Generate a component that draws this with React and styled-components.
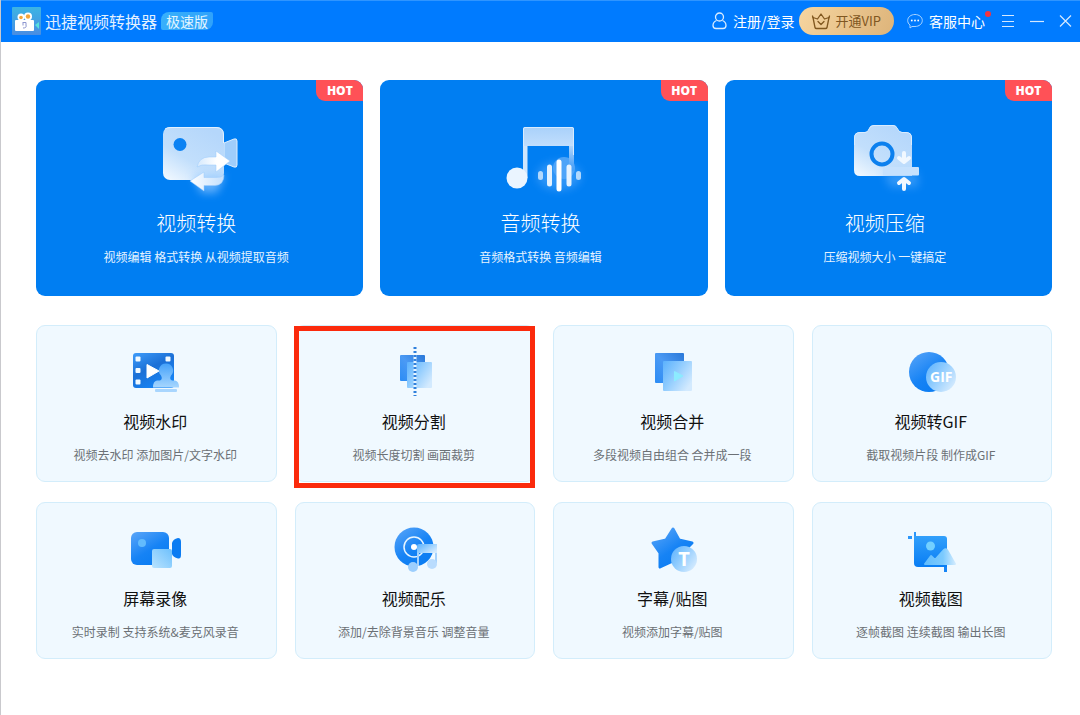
import React from "react";
import styled, { createGlobalStyle } from "styled-components";

const GlobalStyle = createGlobalStyle`
  body {
    margin: 0;
    background: #fff;
    font-family: "Noto Sans CJK SC", "Noto Sans", sans-serif;
  }

  button {
    font: inherit;
    color: inherit;
    border: 0;
    padding: 0;
    background: none;
    cursor: pointer;
  }

  svg {
    display: block;
    flex-shrink: 0;
  }
`;

const Window = styled.div`
  min-height: 100vh;
  box-sizing: border-box;
  border-left: 1px solid #c9c9cd;
`;

const TitleBar = styled.header`
  display: flex;
  align-items: center;
  justify-content: space-between;
  height: 42px;
  box-sizing: border-box;
  padding: 0 7px 1px 11px;
  background: #007bff;
  border-top: 1px solid #2f95ff;
  color: #fff;
`;

const Brand = styled.div`
  display: flex;
  align-items: center;
  gap: 4px;
`;

const BrandName = styled.h1`
  margin: 0;
  font-size: 16px;
  font-weight: 400;
  line-height: 24px;
  color: #e3f1ff;
`;

const Edition = styled.span`
  padding: 0 5px;
  border-radius: 8px 2px 8px 2px;
  background: linear-gradient(100deg, #38b0fb, #2fa2fb);
  color: #e3f6ff;
  font-size: 14px;
  line-height: 18px;
`;

const Toolbar = styled.div`
  display: flex;
  align-items: center;
`;

const ToolButton = styled.button`
  position: relative;
  display: flex;
  align-items: center;
  gap: 6px;
  font-size: 14px;
  line-height: 20px;
`;

const VipButton = styled(ToolButton)`
  gap: 4px;
  height: 28px;
  margin: 0 13px 0 5px;
  padding: 0 13px 0 12px;
  border-radius: 14px;
  background: linear-gradient(115deg, #f6d5a0, #ddb47a);
  color: #7f5722;
  font-size: 13px;
`;

const Dot = styled.span`
  position: absolute;
  top: 0;
  right: -6px;
  width: 6px;
  height: 6px;
  border-radius: 50%;
  background: #f5333f;
`;

const WindowControls = styled.div`
  display: flex;
  align-items: center;
  gap: 15px;
  margin-left: 16px;
`;

const Content = styled.main`
  padding: 38px 28px 24px 35px;
`;

const HeroGrid = styled.div`
  display: grid;
  grid-template-columns: repeat(3, 1fr);
  gap: 17px;
  margin-bottom: 29px;
`;

const HeroCard = styled.button`
  position: relative;
  display: flex;
  flex-direction: column;
  align-items: center;
  padding: 35px 7px 30px 0;
  border-radius: 9px;
  background: #007ef2;
  color: #fff;
`;

const HeroTitle = styled.span`
  margin-top: 14px;
  font-size: 20px;
  font-weight: 300;
  line-height: 28px;
`;

const HeroText = styled.span`
  margin-top: 11px;
  font-size: 12px;
  line-height: 18px;
  color: #e6f3ff;
`;

const HotTag = styled.span`
  position: absolute;
  top: 0;
  right: 0;
  width: 47px;
  border-radius: 0 9px 0 9px;
  background: #ff5157;
  font-family: "Open Sans", sans-serif;
  font-size: 12px;
  font-weight: 800;
  line-height: 21px;
  text-align: center;
`;

const ToolGrid = styled.div`
  display: grid;
  grid-template-columns: repeat(4, 1fr);
  gap: 20px 18px;
`;

const ToolCard = styled.button`
  position: relative;
  display: flex;
  flex-direction: column;
  align-items: center;
  padding: 19px 2px 17px 0;
  border: 1px solid #d3edfb;
  border-radius: 9px;
  background: #f0f9ff;

  ${(props) =>
    props.$marked &&
    `
    &::after {
      content: "";
      position: absolute;
      inset: 0 -1px -7px -2px;
      border: 5px solid #fb2a0c;
      background: transparent;
    }
  `}
`;

const ToolTitle = styled.span`
  margin-top: 12px;
  font-size: 16px;
  line-height: 24px;
  color: #111;
`;

const ToolText = styled.span`
  margin-top: 13px;
  font-size: 12px;
  line-height: 18px;
  color: #6b7075;
`;

const HeroIcon = ({ children }) => (
  <svg width="90" height="80" viewBox="0 0 90 80" overflow="visible" aria-hidden="true">
    {children}
  </svg>
);

const ToolIcon = ({ children }) => (
  <svg width="60" height="52" viewBox="0 0 60 52" aria-hidden="true">
    {children}
  </svg>
);

// gradients and the glow used by all the card icons
const IconDefsSvg = styled.svg`
  position: absolute;
`;

const IconDefs = () => (
  <IconDefsSvg width="0" height="0" aria-hidden="true">
    <defs>
      <linearGradient id="frost" x1="0" y1="1" x2="0.7" y2="0">
        <stop offset="0" stopColor="#f4faff" />
        <stop offset="0.45" stopColor="#c2dffc" />
        <stop offset="1" stopColor="#b5d7fb" />
      </linearGradient>
      <linearGradient id="frostDown" x1="0" y1="0" x2="0" y2="1">
        <stop offset="0" stopColor="#a9d1fa" />
        <stop offset="0.4" stopColor="#c3dffd" />
        <stop offset="1" stopColor="#f4faff" />
      </linearGradient>
      <linearGradient id="arrowRight" x1="0" y1="0" x2="1" y2="0">
        <stop offset="0" stopColor="#d5e9fd" />
        <stop offset="0.6" stopColor="#fff" />
      </linearGradient>
      <linearGradient id="arrowLeft" x1="0" y1="0" x2="1" y2="0">
        <stop offset="0" stopColor="#fff" />
        <stop offset="1" stopColor="#c3dffd" />
      </linearGradient>
      <linearGradient id="stemFade" gradientUnits="userSpaceOnUse" x1="0" y1="30" x2="0" y2="56">
        <stop offset="0" stopColor="#b4d7fb" />
        <stop offset="1" stopColor="#3f9af6" />
      </linearGradient>
      <linearGradient id="deep" x1="0" y1="0" x2="0.7" y2="1">
        <stop offset="0" stopColor="#5ba6f8" />
        <stop offset="0.6" stopColor="#1683f5" />
        <stop offset="1" stopColor="#0a7cf2" />
      </linearGradient>
      <linearGradient id="film" x1="0" y1="0" x2="0.6" y2="1">
        <stop offset="0" stopColor="#3e9cfa" />
        <stop offset="0.5" stopColor="#1c70d6" />
        <stop offset="1" stopColor="#1685f6" />
      </linearGradient>
      <linearGradient id="square" x1="0" y1="1" x2="1" y2="0">
        <stop offset="0" stopColor="#2b8cf5" />
        <stop offset="0.5" stopColor="#4b9af4" />
        <stop offset="1" stopColor="#2a78d8" />
      </linearGradient>
      <linearGradient id="glass" x1="0" y1="0" x2="1" y2="0.7">
        <stop offset="0" stopColor="#5bb1fd" />
        <stop offset="0.45" stopColor="#8ccafe" />
        <stop offset="1" stopColor="#d3eafe" />
      </linearGradient>
      <linearGradient id="pale" x1="0" y1="1" x2="1" y2="0">
        <stop offset="0" stopColor="#b9e3fe" />
        <stop offset="1" stopColor="#6dc0fd" />
      </linearGradient>
      <linearGradient id="mountain" x1="0" y1="0" x2="1" y2="0">
        <stop offset="0" stopColor="#62bdfd" />
        <stop offset="0.6" stopColor="#7bcafe" />
        <stop offset="1" stopColor="#cfeafe" />
      </linearGradient>
      <linearGradient id="stamp" x1="0" y1="0" x2="0" y2="1">
        <stop offset="0" stopColor="#45a2fa" />
        <stop offset="1" stopColor="#a6d6fe" />
      </linearGradient>
      <linearGradient id="bright" x1="0" y1="0" x2="0" y2="1">
        <stop offset="0" stopColor="#32a0fb" />
        <stop offset="1" stopColor="#087df4" />
      </linearGradient>
      <filter id="glow" x="-60%" y="-60%" width="220%" height="220%">
        <feGaussianBlur stdDeviation="4" />
      </filter>
    </defs>
  </IconDefsSvg>
);

const VideoConvertIcon = () => (
  <HeroIcon>
    <path d="M73 28 L83 24 Q86 23 86 26 V50 Q86 53 83 52 L73 48 Z" fill="#9fcdfb" stroke="#dcedfe" />
    <rect x="12" y="12" width="61" height="53" rx="7" fill="url(#frost)" />
    <path d="M14 14 Q16 12.500 20 12.500 H65 Q72.500 12.500 72.500 20 V28" fill="none" stroke="#e3f1ff" />
    <circle cx="29" cy="29.500" r="6.500" fill="#0b82f3" />
    <path d="M42 60 H74 L66 78 H50 Z" fill="#8cc5ff" opacity="0.7" filter="url(#glow)" />
    <path
      d="M46 52 Q48 42 58 42 H65 V36 L79 46 L65 57 V50 H58 Q50 49 46 52 Z"
      fill="url(#arrowRight)"
      stroke="#9dcbfb"
      strokeOpacity="0.5"
    />
    <path
      d="M39 66 L53 57 V62.500 H64 Q70 63 73 60 Q73 70 64 70.500 H53 V76 Z"
      fill="url(#arrowLeft)"
      stroke="#9dcbfb"
      strokeOpacity="0.5"
    />
  </HeroIcon>
);

const AudioConvertIcon = () => (
  <HeroIcon>
    <circle cx="69" cy="53" r="11" fill="#5facf8" opacity="0.8" />
    <path d="M74 30 H79 V56 H74 Z" fill="url(#stemFade)" />
    <path d="M28 14 Q28 12 30 12 H77 Q79 12 79 14 V31 H32 V63 H28 Z" fill="url(#frostDown)" />
    <path d="M28.500 58 V14 Q28.500 12.500 30 12.500 H77 Q78.500 12.500 78.500 14 V40" fill="none" stroke="#d8ebfe" />
    <path d="M32.500 31 V63 H28 V31 Z" fill="#cfe6fd" />
    <circle cx="22" cy="63" r="10.500" fill="#eaf5ff" />
    <ellipse cx="64" cy="61" rx="22" ry="14" fill="#4fa5fb" opacity="0.6" filter="url(#glow)" />
    <g stroke="#e4f2ff" strokeWidth="5" strokeLinecap="round">
      <path d="M45.500 58.500 V62.500" opacity="0.75" />
      <path d="M54.500 52 V69" />
      <path d="M64 47 V74" stroke="#fff" />
      <path d="M74 52 V69" />
      <path d="M83.500 58.500 V62.500" opacity="0.75" />
    </g>
  </HeroIcon>
);

const CompressIcon = () => (
  <HeroIcon>
    <path
      d="M14 23 Q14 17 20 17 H25 Q28 17 29 14 Q30 10 34 10 H53 Q56 10 57 13 Q59 17 62 17 H66 Q72 17 72 23 V61 H20 Q14 61 14 55 Z"
      fill="url(#frost)"
    />
    <path
      d="M14.500 30 V23 Q14.500 17.500 20 17.500 H25 Q28 17.500 29 14 Q30 10.500 34 10.500 H53 Q56 10.500 57 13 Q59 17.500 62 17.500 H66 Q71.500 17.500 71.500 23 V30"
      fill="none"
      stroke="#d9ecff"
    />
    <circle cx="42" cy="39" r="10.500" fill="none" stroke="#0c80ee" strokeWidth="4" />
    <path d="M44 58 H78 V72 H50 Z" fill="#64b1fd" opacity="0.5" filter="url(#glow)" />
    <rect x="43" y="52" width="36" height="8.500" rx="1" fill="#c6e1fd" />
    <g fill="none" stroke="#f1f8ff" strokeWidth="4" strokeLinecap="round" strokeLinejoin="round">
      <path d="M64 38 V46 M59 43 L64 47 L69 43" />
      <path d="M64 74 V65 M59 68 L64 64 L69 68" />
    </g>
  </HeroIcon>
);

const WatermarkIcon = () => (
  <ToolIcon>
    <rect x="8" y="8" width="41" height="35" rx="3" fill="url(#film)" />
    <g fill="#f2faff">
      <rect x="10.500" y="11.500" width="5" height="5" rx="1" />
      <rect x="10.500" y="23" width="5" height="5" rx="1" />
      <rect x="10.500" y="34.500" width="5" height="5" rx="1" />
      <rect x="40.500" y="11.500" width="5" height="5" rx="1" />
    </g>
    <path d="M22 19.500 V33 L34 26 Z" fill="#fff" stroke="#fff" strokeLinejoin="round" />
    <path
      d="M41 18.500 A7 7 0 0 1 46 30.500 Q44 34 47 35.500 H50 Q54 36 54 42.500 H28 Q28 36 32 35.500 H35 Q38 34 36 30.500 A7 7 0 0 1 41 18.500 Z"
      fill="url(#stamp)"
    />
    <rect x="30" y="44" width="22" height="3" rx="1" fill="#a9d6fe" />
  </ToolIcon>
);

const SplitIcon = () => (
  <ToolIcon>
    <rect x="16" y="10" width="25" height="26" rx="1" fill="url(#square)" />
    <rect x="23" y="17" width="25" height="26" rx="1" fill="url(#glass)" />
    <path d="M31 10 V43" stroke="#e6f4ff" strokeWidth="3" />
    <path d="M31 2 V51" stroke="#2f80dc" strokeWidth="3" strokeDasharray="2 2" />
  </ToolIcon>
);

const MergeIcon = () => (
  <ToolIcon>
    <rect x="13" y="8" width="29" height="30" rx="1" fill="url(#square)" />
    <rect x="21" y="16" width="29" height="30" rx="1" fill="url(#glass)" />
    <path d="M32.500 26.500 V36 L41 31 Z" fill="#8cebff" stroke="#8cebff" strokeLinejoin="round" />
  </ToolIcon>
);

const GifIcon = () => (
  <ToolIcon>
    <circle cx="28" cy="27" r="20" fill="url(#deep)" />
    <circle cx="40" cy="32" r="15" fill="url(#glass)" />
    <text x="29" y="37" fill="#fff" fontFamily="Open Sans, sans-serif" fontSize="14" fontWeight="700">
      GIF
    </text>
  </ToolIcon>
);

const RecordIcon = () => (
  <ToolIcon>
    <rect x="6" y="10" width="38" height="33" rx="6" fill="url(#deep)" />
    <circle cx="17" cy="21" r="4" fill="#62bbfd" />
    <path d="M47 21 Q48 17 53 16 Q56 16 56 20 V33 Q56 37 53 36.500 Q48 35 47 32 Z" fill="#0b7cf2" />
    <rect x="27" y="27" width="20" height="19" rx="2" fill="url(#pale)" />
  </ToolIcon>
);

const MusicIcon = () => (
  <ToolIcon>
    <circle cx="30" cy="25" r="19.500" fill="url(#deep)" />
    <circle cx="30" cy="25" r="10" fill="none" stroke="#e7f5ff" strokeWidth="1.500" />
    <circle cx="30" cy="25" r="3" fill="#fff" />
    <path d="M34 30 V44 M52 30 V41" stroke="#a5d2fd" strokeWidth="2" />
    <path d="M33 24 Q33 22 35 22 H53 V31 H33 Z" fill="url(#glass)" />
    <circle cx="29" cy="45" r="5" fill="#9ccefd" />
    <circle cx="48" cy="42" r="5" fill="#b9dcfe" />
  </ToolIcon>
);

const StickerIcon = () => (
  <ToolIcon>
    <path
      d="M31 7 L37 18 L50 21 L41 30 L44 44 L31 39 L18 45 L18 31 L11 21 L24 18 Z"
      fill="url(#deep)"
      stroke="url(#deep)"
      strokeWidth="3"
      strokeLinejoin="round"
    />
    <circle cx="42" cy="37" r="13" fill="url(#glass)" />
    <text x="42" y="44" fill="#fff" fontFamily="Open Sans, sans-serif" fontSize="20" fontWeight="700" textAnchor="middle">
      T
    </text>
  </ToolIcon>
);

const ScreenshotIcon = () => (
  <ToolIcon>
    <path d="M7 15.500 H11" stroke="#2b96fa" strokeWidth="3" />
    <path d="M14 10 V18" stroke="#2b96fa" strokeWidth="2" />
    <path d="M44.500 40 V50" stroke="#1685f6" strokeWidth="3" />
    <path d="M13 14 H43 Q46 14 46 17 V45 H17 Q13 45 13 41 Z" fill="url(#bright)" />
    <circle cx="29.500" cy="24" r="4.500" fill="#73d0ff" />
    <path
      d="M24 42 L30 34 L34 38 L43 28 Q44.500 26.500 46 28 L54 42 Z"
      fill="url(#mountain)"
      stroke="url(#mountain)"
      strokeWidth="2"
      strokeLinejoin="round"
    />
  </ToolIcon>
);

const LogoIcon = () => (
  <svg width="29" height="28" viewBox="0 0 29 28" aria-hidden="true">
    <defs>
      <linearGradient id="logo" x1="0" y1="0" x2="0" y2="1">
        <stop offset="0" stopColor="#3cb4e4" />
        <stop offset="1" stopColor="#4a8de2" />
      </linearGradient>
    </defs>
    <rect width="29" height="28" rx="1" fill="url(#logo)" />
    <circle cx="9" cy="10" r="3.500" fill="#fff" />
    <circle cx="16" cy="9.500" r="4" fill="#fff" />
    <circle cx="9" cy="10.500" r="1.800" fill="#f3a63b" />
    <circle cx="16" cy="9.500" r="2.200" fill="#f3a63b" />
    <rect x="3" y="13" width="19" height="11" rx="1" fill="#fff" />
    <path d="M10.500 15.500 H14 V18 Q15 21 11 21 M11 18.500 V16" fill="none" stroke="#8d96cf" />
    <path d="M23 18 L27 15 V22 Z" fill="#58e0dc" />
  </svg>
);

const UserIcon = () => (
  <svg width="15" height="18" viewBox="0 0 15 18" fill="none" stroke="#d9ecff" strokeWidth="1.300" aria-hidden="true">
    <circle cx="7.500" cy="5" r="4" />
    <path d="M4.500 8.500 Q1 10 1 13.500 Q1 16.500 4 16.500 H11 Q14 16.500 14 13.500 Q14 10 10.500 8.500" />
  </svg>
);

const CrownIcon = () => (
  <svg
    width="20"
    height="18"
    viewBox="0 0 20 18"
    fill="none"
    stroke="#80571f"
    strokeWidth="1.300"
    strokeLinejoin="round"
    strokeLinecap="round"
    aria-hidden="true"
  >
    <path d="M4 15.500 L2 5.500 L6.500 7 L10 2 L13.500 7 L18 5.500 L16 15.500 Q15.800 16.500 14.500 16.500 H5.500 Q4.200 16.500 4 15.500 Z" />
    <path d="M7 9.500 L10 12.500 L13 9.500" />
    <path d="M1.500 4 L2 5.500 M18.500 4 L18 5.500" />
  </svg>
);

const ChatIcon = () => (
  <svg width="16" height="16" viewBox="0 0 16 16" fill="none" stroke="#a9d4ff" aria-hidden="true">
    <path d="M8 1.500 C12 1.500 15.300 4 15.300 7.500 C15.300 11 12 13.500 8 13.500 H5 L3 15 V12 C1.500 11 0.700 9.300 0.700 7.500 C0.700 4 4 1.500 8 1.500 Z" />
    <g fill="#fff" stroke="none">
      <circle cx="4.800" cy="7.500" r="0.900" />
      <circle cx="8" cy="7.500" r="0.900" />
      <circle cx="11.200" cy="7.500" r="0.900" />
    </g>
  </svg>
);

const ControlIcon = ({ d }) => (
  <svg width="14" height="14" viewBox="0 0 14 14" fill="none" stroke="#d4e9ff" strokeWidth="1.200" aria-hidden="true">
    <path d={d} />
  </svg>
);

const heroes = [
  { title: "视频转换", text: "视频编辑 格式转换 从视频提取音频", Icon: VideoConvertIcon },
  { title: "音频转换", text: "音频格式转换 音频编辑", Icon: AudioConvertIcon },
  { title: "视频压缩", text: "压缩视频大小 一键搞定", Icon: CompressIcon },
];

const tools = [
  { title: "视频水印", text: "视频去水印 添加图片/文字水印", Icon: WatermarkIcon },
  { title: "视频分割", text: "视频长度切割 画面裁剪", Icon: SplitIcon, marked: true },
  { title: "视频合并", text: "多段视频自由组合 合并成一段", Icon: MergeIcon },
  { title: "视频转GIF", text: "截取视频片段 制作成GIF", Icon: GifIcon },
  { title: "屏幕录像", text: "实时录制 支持系统&麦克风录音", Icon: RecordIcon },
  { title: "视频配乐", text: "添加/去除背景音乐 调整音量", Icon: MusicIcon },
  { title: "字幕/贴图", text: "视频添加字幕/贴图", Icon: StickerIcon },
  { title: "视频截图", text: "逐帧截图 连续截图 输出长图", Icon: ScreenshotIcon },
];

const App = () => {
  return (
    <Window>
      <GlobalStyle />
      <IconDefs />
      <TitleBar>
        <Brand>
          <LogoIcon />
          <BrandName>迅捷视频转换器</BrandName>
          <Edition>极速版</Edition>
        </Brand>
        <Toolbar>
          <ToolButton type="button">
            <UserIcon />
            注册/登录
          </ToolButton>
          <VipButton type="button">
            <CrownIcon />
            开通VIP
          </VipButton>
          <ToolButton type="button">
            <ChatIcon />
            客服中心
            <Dot />
          </ToolButton>
          <WindowControls>
            <ToolButton type="button" aria-label="菜单">
              <ControlIcon d="M1 1.500 H13 M1 7.500 H13 M1 12.500 H13" />
            </ToolButton>
            <ToolButton type="button" aria-label="最小化">
              <ControlIcon d="M0 7.500 H14" />
            </ToolButton>
            <ToolButton type="button" aria-label="关闭">
              <ControlIcon d="M1 1.500 L12 12.500 M12 1.500 L1 12.500" />
            </ToolButton>
          </WindowControls>
        </Toolbar>
      </TitleBar>
      <Content>
        <HeroGrid>
          {heroes.map(({ title, text, Icon }) => (
            <HeroCard key={title} type="button">
              <HotTag>HOT</HotTag>
              <Icon />
              <HeroTitle>{title}</HeroTitle>
              <HeroText>{text}</HeroText>
            </HeroCard>
          ))}
        </HeroGrid>
        <ToolGrid>
          {tools.map(({ title, text, Icon, marked }) => (
            <ToolCard key={title} type="button" $marked={marked}>
              <Icon />
              <ToolTitle>{title}</ToolTitle>
              <ToolText>{text}</ToolText>
            </ToolCard>
          ))}
        </ToolGrid>
      </Content>
    </Window>
  );
};

export default App;
